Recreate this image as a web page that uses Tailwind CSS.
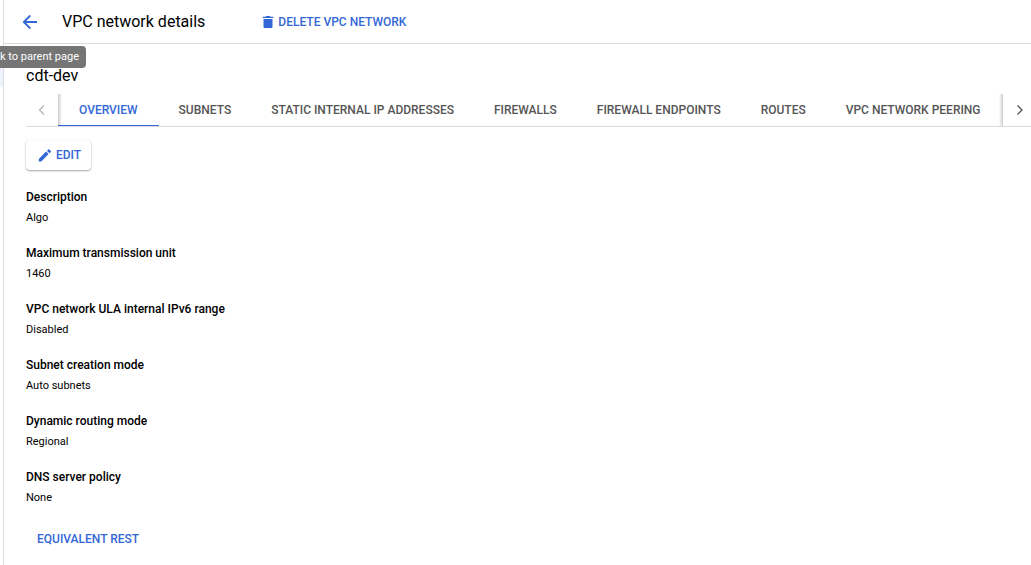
<!DOCTYPE html>
<html lang="en">
<head>
<meta charset="utf-8">
<title>VPC network details</title>
<script src="https://cdn.jsdelivr.net/npm/@tailwindcss/browser@4"></script>
</head>
<body class="relative flex min-h-screen overflow-x-hidden bg-white font-['Roboto',sans-serif] text-black">
  <aside class="w-[3px] shrink-0 pt-[68px]"><div class="h-[19px] bg-[#eef3fe]"></div></aside>
  <div class="flex min-w-0 flex-1 flex-col border-l border-[#dadce0]">
    <header class="flex h-11 items-center border-b border-[#dadce0] pl-[18px]">
      <button type="button" aria-label="Back to parent page" aria-describedby="tip" class="text-[#3367d6]">
        <svg class="size-4" viewBox="0 0 16 16" fill="none" stroke="currentColor" stroke-width="1.8"><path d="M15 8H2.500M8.300 1.500L1.800 8l6.500 6.500"/></svg>
      </button>
      <h1 class="ml-6 text-base leading-5">VPC network details</h1>
      <button type="button" class="ml-[57px] flex items-center gap-1 text-xs font-medium text-[#3367d6]">
        <svg class="h-[14px] w-3" viewBox="0 0 12 14" fill="currentColor"><path d="M1.500 4h9v7.800c0 .8-.5 1.200-1.200 1.200H2.700c-.7 0-1.200-.5-1.200-1.200zM.7 1.700h2.800l.7-.7h3.600l.7.700h2.800V3H.7z"/></svg>
        DELETE VPC NETWORK
      </button>
    </header>
    <main class="pl-[22px]">
      <h2 class="mt-[22px] text-base leading-5">cdt-dev</h2>
      <div class="mt-2 flex h-[33px] border-b border-[#dadce0]">
        <button type="button" aria-label="Previous tabs" disabled class="flex w-8 shrink-0 items-center justify-center text-[#b5b5b5]">
          <svg class="h-3 w-2" viewBox="0 0 8 12" fill="none" stroke="currentColor" stroke-width="1.3"><path d="M6 1.500L1.500 6 6 10.500"/></svg>
        </button>
        <div class="relative min-w-0 flex-1 overflow-hidden">
          <div role="tablist" class="flex h-full whitespace-nowrap text-xs font-medium text-[#555]">
            <button type="button" role="tab" aria-selected="true" class="shrink-0 border-b border-[#3367d6] px-[21px] text-[#3367d6]">OVERVIEW</button>
            <button type="button" role="tab" class="shrink-0 border-b border-transparent px-5">SUBNETS</button>
            <button type="button" role="tab" class="shrink-0 border-b border-transparent px-5">STATIC INTERNAL IP ADDRESSES</button>
            <button type="button" role="tab" class="shrink-0 border-b border-transparent px-5">FIREWALLS</button>
            <button type="button" role="tab" class="shrink-0 border-b border-transparent px-5">FIREWALL ENDPOINTS</button>
            <button type="button" role="tab" class="shrink-0 border-b border-transparent px-5">ROUTES</button>
            <button type="button" role="tab" class="shrink-0 border-b border-transparent px-5">VPC NETWORK PEERING</button>
          </div>
          <div class="pointer-events-none absolute top-0 bottom-px left-0 w-1 bg-linear-to-r from-black/20 to-transparent"></div>
          <div class="pointer-events-none absolute inset-y-0 right-0 w-1 bg-linear-to-l from-black/20 to-transparent"></div>
        </div>
        <button type="button" aria-label="Next tabs" class="flex w-7 shrink-0 items-center pl-[13px] text-[#555]">
          <svg class="h-3 w-2" viewBox="0 0 8 12" fill="none" stroke="currentColor" stroke-width="1.3"><path d="M1.500 1.500L6 6l-4.500 4.500"/></svg>
        </button>
      </div>
      <button type="button" class="mt-[13px] flex h-[30px] items-center gap-1 rounded-sm pr-[10px] pl-3 text-xs font-medium text-[#3367d6] shadow-[0_1px_2px_rgba(0,0,0,0.35),0_0_1px_rgba(0,0,0,0.1)]">
        <svg class="size-[14px]" viewBox="0 0 14 14" fill="currentColor"><path d="M.8 10.900v2.500h2.500l7.300-7.300-2.500-2.500zM12.800 3.900c.3-.3.300-.7 0-1l-1.500-1.500c-.3-.3-.7-.3-1 0L9 2.700l2.500 2.500z"/></svg>
        EDIT
      </button>
      <dl class="mt-[19px] flex flex-col gap-[19px] text-[11px] leading-4">
        <div><dt class="text-xs leading-4 font-medium">Description</dt><dd class="mt-[5px]">Algo</dd></div>
        <div><dt class="text-xs leading-4 font-medium">Maximum transmission unit</dt><dd class="mt-[5px]">1460</dd></div>
        <div><dt class="text-xs leading-4 font-medium">VPC network ULA internal IPv6 range</dt><dd class="mt-[5px]">Disabled</dd></div>
        <div><dt class="text-xs leading-4 font-medium">Subnet creation mode</dt><dd class="mt-[5px]">Auto subnets</dd></div>
        <div><dt class="text-xs leading-4 font-medium">Dynamic routing mode</dt><dd class="mt-[5px]">Regional</dd></div>
        <div><dt class="text-xs leading-4 font-medium">DNS server policy</dt><dd class="mt-[5px]">None</dd></div>
      </dl>
      <button type="button" class="mt-[17px] flex h-8 items-center px-[11px] text-xs font-medium text-[#3367d6]">EQUIVALENT REST</button>
    </main>
  </div>
  <div id="tip" role="tooltip" class="absolute top-[46px] left-0 h-[22px] rounded-r bg-[#757575] pr-[7px] text-[11px] leading-[22px] whitespace-nowrap text-white">k to parent page</div>
</body>
</html>
